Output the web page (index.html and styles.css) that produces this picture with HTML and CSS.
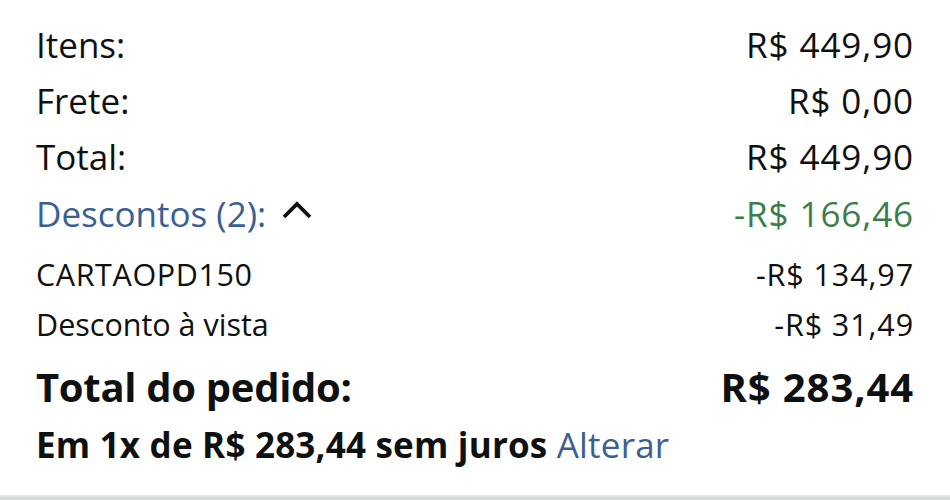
FILE: index.html
```html
<!DOCTYPE html>
<html lang="pt-BR">
<head>
<meta charset="utf-8">
<title>Resumo do pedido</title>
<link rel="stylesheet" href="styles.css">
</head>
<body>
<main class="summary">
  <div class="row big"><span>Itens:</span><span class="num">R$ 449,90</span></div>
  <div class="row big"><span>Frete:</span><span class="num">R$ 0,00</span></div>
  <div class="row big"><span>Total:</span><span class="num">R$ 449,90</span></div>
  <div class="row big discounts">
    <span class="link">Descontos (2):<svg class="chev" viewBox="0 0 30 18" width="30" height="18"><path d="M2 16 L15 3 L28 16" fill="none" stroke="#0f1111" stroke-width="3.8"/></svg></span>
    <span class="num green">-R$ 166,46</span>
  </div>
  <div class="row small first"><span class="code">CARTAOPD150</span><span class="num">-R$ 134,97</span></div>
  <div class="row small"><span>Desconto à vista</span><span class="num">-R$ 31,49</span></div>
  <div class="row grand"><span class="tight">Total do pedido:</span><span class="num-bold">R$ 283,44</span></div>
  <div class="row install"><span>Em 1x de R$ 283,44 sem juros <a class="alter">Alterar</a></span></div>
</main>
<div class="bottom-bar"></div>
</body>
</html>
```
FILE: styles.css
```css
html, body {
  margin: 0;
  padding: 0;
  background: #ffffff;
}
body {
  width: 950px;
  height: 500px;
  overflow: hidden;
  font-family: "Open Sans", "Noto Sans", sans-serif;
  color: #0f1111;
  display: flex;
  flex-direction: column;
}
.summary {
  padding: 17px 36px 0 36px;
  flex: 1;
}
.row {
  display: flex;
  justify-content: space-between;
  align-items: baseline;
  white-space: nowrap;
}
.big {
  font-size: 35px;
  line-height: 56px;
}
.num {
  letter-spacing: 0.9px;
}
.code {
  letter-spacing: 0.6px;
}
.discounts {
  line-height: 58px;
}
.link {
  color: #3a5f93;
  display: inline-flex;
  align-items: center;
}
.chev {
  margin-left: 16px;
  margin-top: -8px;
}
.green {
  color: #3b7d4b;
}
.small {
  font-size: 30.5px;
  line-height: 50px;
}
.small.first {
  margin-top: 6px;
}
.grand {
  font-size: 40px;
  font-weight: 700;
  line-height: 60px;
  margin-top: 8px;
}
.tight {
  letter-spacing: -0.3px;
}
.num-bold {
  letter-spacing: 0.9px;
}
.install {
  font-size: 35px;
  font-weight: 700;
  line-height: 56px;
  letter-spacing: 0.2px;
}
.alter {
  color: #3a5f93;
  font-weight: 400;
}
.bottom-bar {
  height: 3px;
  border-top: 2px solid #e6e8e8;
  background: #d5d9d9;
}
```
